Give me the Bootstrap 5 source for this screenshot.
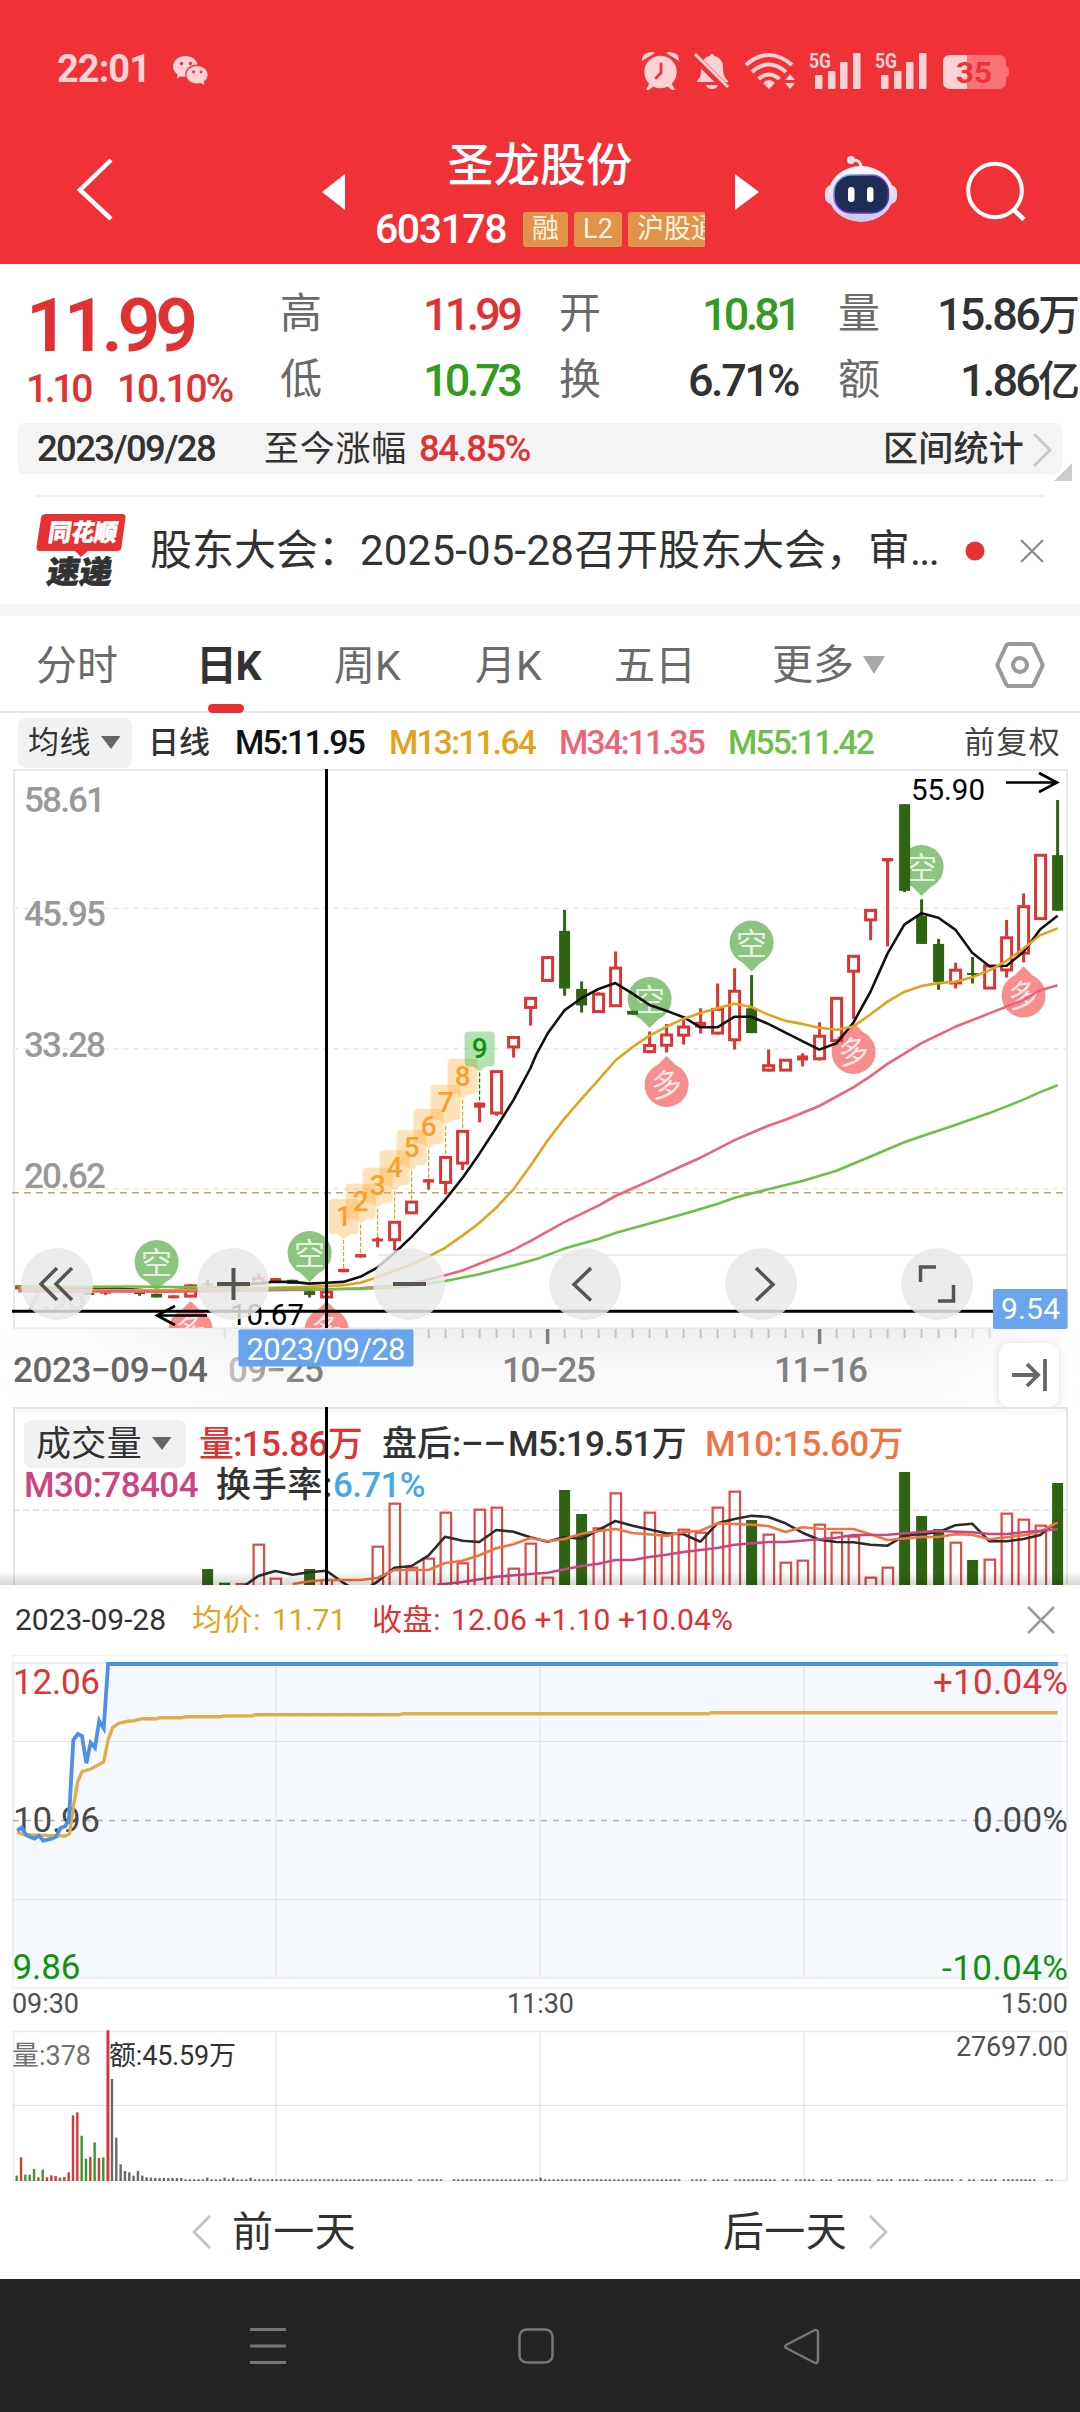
<!DOCTYPE html>
<html lang="zh-CN">
<head>
<meta charset="utf-8">
<meta name="viewport" content="width=device-width, initial-scale=1">
<title>圣龙股份 603178</title>
<link rel="stylesheet" href="https://cdn.jsdelivr.net/npm/bootstrap@5.3.0/dist/css/bootstrap.min.css">
<style>
body{width:1080px;margin:0;background:#fff;color:#323232;font-family:Roboto,"Noto Sans CJK SC",sans-serif;line-height:1;overflow-x:hidden}
svg{display:block}
svg text{font-family:Roboto,"Noto Sans CJK SC",sans-serif}
[data-w]{display:inline-block;white-space:nowrap}
.red{color:#e03232}.green{color:#339a22}.gray{color:#6a6a6a}
.hd{height:264px;background:#f13138;color:#fff}
.status{height:142px;padding:0 0 0 57px;color:#fcd3d5}
.clock{font-size:38px;font-weight:700;margin-top:-4px}
.titlebar{height:122px}
.name{font-size:46px;font-weight:500;height:46px;line-height:46px}
.code{font-size:41px;font-weight:500}
.chip{background:#e2924b;color:#fff4dc;border-radius:3px;height:35px;line-height:34px;font-size:27px;padding:0 9px;white-space:nowrap}
.chips{width:182px;gap:6px;overflow:hidden}
.quote{height:159px;padding-top:17px}
.price{font-size:75px;font-weight:600;padding-top:7px;height:89px}
.chg{font-size:39px;font-weight:500}
.qcell{height:66px}
.qcell .lab{font-size:42px}
.qcell .val{font-size:45px;font-weight:500}
.qcell .val small{font-size:42px}
.range{margin:0 18px;height:51px;background:#f4f4f4;border-radius:6px;padding:2px 9px 0 19px;font-size:35px}
.range .num{font-size:36.5px;font-weight:500}
.corner{right:8px;top:463px}
.news{height:109px;margin-left:36px;margin-right:36px;border-top:2px solid #eee;font-size:42px}
.band{height:12px;background:#f4f4f4}
.tabs{height:97px;border-bottom:2px solid #e6e6e6;font-size:41px;color:#6a6a6a}
.tabs>div{position:relative;height:97px;line-height:100px;white-space:nowrap}
.tabs .on{color:#323232;font-weight:700}
.tabs .on::after{content:"";position:absolute;left:12px;bottom:0;width:36px;height:9px;border-radius:5px;background:#e63232}
.ma{height:56px;font-size:31px;padding-top:3px}
.ma .num{font-weight:500;font-size:33.5px}
.vinfo .num{font-weight:500;font-size:35px}
.pick{background:#f1f1f1;border-radius:8px;white-space:nowrap}
.kpane{height:638px}
.ctl{left:21px;top:479px;gap:104px}
.rnd{width:72px;height:72px;border-radius:50%;background:rgba(232,232,232,.84)}
.jump{left:999px;top:574px;width:60px;height:64px;border-radius:11px;background:#fff;box-shadow:0 1px 9px rgba(0,0,0,.13)}
.vpane{height:178px}
.vinfo{padding:13px 0 0 24px;font-size:35px;font-weight:500}
.sheet{background:#fff}
.shead{height:70px;padding:0 25px 0 15px;font-size:30px}
.pn{height:96px;font-size:41px;padding-top:2px}
.sysnav{height:133px;background:#242424}
</style>
<script src="https://cdn.jsdelivr.net/npm/bootstrap@5.3.0/dist/js/bootstrap.bundle.min.js"></script>
</head>
<body>
<header class="hd">
  <div class="status d-flex align-items-center">
    <span class="clock" data-w="93">22:01</span>
    <svg width="36" height="30" viewBox="0 0 36 30" style="margin-left:23px" fill="#fcd3d5"><path d="M13 0C5.500 0 0 4.800 0 10.600c0 3.300 1.800 6 4.700 8L3.700 22.400l4.300-2.200c1.500.4 3 .6 4.500.5C11 14 16.500 8.500 24.700 8.600 23.500 3.600 18.700 0 13 0z"/><path d="M24 10c-6 0-10.500 3.900-10.500 8.800S18 27.600 24 27.600c1.300 0 2.500-.2 3.600-.5l4 2-1-3.300c2.500-1.700 4-4.200 4-7C34.600 13.900 30 10 24 10z"/><g fill="#f13138"><circle cx="8.500" cy="7.500" r="1.700"/><circle cx="17.500" cy="7.500" r="1.700"/><circle cx="20.500" cy="16" r="1.400"/><circle cx="28" cy="16" r="1.400"/></g></svg>
    <svg width="372" height="44" viewBox="640 48 372 44" style="margin-left:431px" fill="#fcd3d5">
      <g><circle cx="660.500" cy="71" r="16.200"/><path d="M642 60q-1-8 9-9 3 0 4 1zM679 60q1-8-9-9-3 0-4 1zM649 83l-3 6h3l5-4zM672 83l3 6h-3l-5-4z"/><path d="M661 63v9l-5 5" fill="none" stroke="#f13138" stroke-width="2.800" stroke-linecap="round"/></g>
      <g><path d="M712 53c2 0 2 2 2 2 6 1 9 6 9 11 0 8 2 11 5 14v1H697v-1c4-4 4-7 4-14 0-6 4-10 9-11 0 0 0-2 2-2zM706 84h12q-1 4-6 4t-6-4z"/><path d="M693 54l35 35" stroke="#f13138" stroke-width="8"/><path d="M695 53l33 33" stroke="#fcd3d5" stroke-width="3"/></g>
      <g fill="none" stroke="#fcd3d5" stroke-width="4"><path d="M746 64q23-20 46 0"/><path d="M752 71q17-15 34 0"/><path d="M758.500 78q10-9 21 0"/></g><path d="M763 82q6-6 12 0l-6 6zM785 79l5-6 5 6zM785 82h10l-5 6z"/>
      <g id="sig"><text x="809" y="66.500" font-size="20" font-weight="700" textLength="22" lengthAdjust="spacingAndGlyphs">5G</text><rect x="815" y="74" width="7.500" height="14" rx="1"/><rect x="828" y="70" width="7.500" height="18" rx="1"/><rect x="840" y="61" width="7.500" height="27" rx="1"/><rect x="853" y="52" width="7.500" height="36" rx="1"/></g>
      <use href="#sig" x="66"/>
      <path d="M951 54h48q7 0 7 7v4q3 1 3 6t-3 5v5q0 7-7 7h-48q-8 0-8-7V61q0-7 8-7z" fill="#f87378"/><path d="M951 54h16v34h-16q-8 0-8-7V61q0-7 8-7z"/><text x="956" y="82" font-size="30" font-weight="700" fill="#f13138" textLength="36" lengthAdjust="spacingAndGlyphs">35</text>
    </svg>
  </div>
  <div class="titlebar d-flex">
    <svg width="322" height="122" viewBox="0 142 322 122"><path d="M111 160L80 190l31 29" fill="none" stroke="#fff" stroke-width="4.500"/></svg>
    <svg width="23" height="122" viewBox="322 142 23 122"><path d="M322 192l23-18v36z" fill="#fff"/></svg>
    <div class="text-center" style="width:390px">
      <div class="name"><span data-w="185">圣龙股份</span></div>
      <div class="d-flex align-items-center" style="padding-left:30px;margin-top:21px">
        <span class="code" data-w="131">603178</span>
        <div class="chips d-flex" style="margin-left:17px"><span class="chip">融</span><span class="chip"><span data-w="30">L2</span></span><span class="chip">沪股通</span></div>
      </div>
    </div>
    <svg width="345" height="122" viewBox="735 142 345 122">
      <defs><linearGradient id="rb" x1="0" y1="0" x2="0" y2="1"><stop offset="0" stop-color="#fdfcff"/><stop offset="1" stop-color="#cfc6ec"/></linearGradient><linearGradient id="rf" x1="0" y1="0" x2="1" y2="1"><stop offset="0" stop-color="#7cd0f0"/><stop offset=".5" stop-color="#8038e0"/><stop offset="1" stop-color="#3a38d0"/></linearGradient></defs>
      <path d="M735 174v36l24-18z" fill="#fff"/>
      <path d="M852 160q9-1 9 8" fill="none" stroke="#eceaf8" stroke-width="3"/><circle cx="851" cy="160" r="4" fill="#dfe2f6"/>
      <rect x="825" y="185" width="72" height="19" rx="7" fill="#dcdcf5"/><ellipse cx="861" cy="194" rx="32.500" ry="28" fill="url(#rb)"/>
      <rect x="834" y="175" width="54.500" height="38" rx="17" fill="#1f2c54" stroke="url(#rf)" stroke-width="1.500"/>
      <rect x="848" y="187" width="6.500" height="15" rx="3.200" fill="#fff"/><rect x="867" y="187" width="6.500" height="15" rx="3.200" fill="#fff"/>
      <circle cx="995" cy="190.500" r="26.800" fill="none" stroke="#fff" stroke-width="4"/><path d="M1013 209l11 10.500" stroke="#fff" stroke-width="4.500"/>
    </svg>
  </div>
</header>

<section class="quote d-flex">
  <div style="width:280px;padding-left:26px">
    <div class="price red"><span data-w="167">11.99</span></div>
    <div class="chg red d-flex"><span data-w="64">1.10</span><span data-w="115" style="margin-left:27px">10.10%</span></div>
  </div>
  <div style="width:242px;padding-right:3px">
    <div class="qcell d-flex align-items-center justify-content-between"><span class="lab gray">高</span><span class="val red" data-w="96">11.99</span></div>
    <div class="qcell d-flex align-items-center justify-content-between"><span class="lab gray">低</span><span class="val green" data-w="96">10.73</span></div>
  </div>
  <div style="width:279px;padding-left:37px;padding-right:3px">
    <div class="qcell d-flex align-items-center justify-content-between"><span class="lab gray">开</span><span class="val green" data-w="96">10.81</span></div>
    <div class="qcell d-flex align-items-center justify-content-between"><span class="lab gray">换</span><span class="val" data-w="110">6.71%</span></div>
  </div>
  <div style="width:279px;padding-left:37px">
    <div class="qcell d-flex align-items-center justify-content-between"><span class="lab gray">量</span><span class="val text-nowrap"><span data-w="101">15.86</span><small>万</small></span></div>
    <div class="qcell d-flex align-items-center justify-content-between"><span class="lab gray">额</span><span class="val text-nowrap"><span data-w="78">1.86</span><small>亿</small></span></div>
  </div>
</section>
<div class="range d-flex align-items-center">
  <span class="num" data-w="178">2023/09/28</span><span data-w="143" style="margin-left:49px">至今涨幅</span><span class="num red" data-w="111" style="margin-left:12px">84.85%</span>
  <span class="ms-auto" data-w="141" style="margin-right:8px;font-weight:500">区间统计</span>
  <svg width="21" height="36" viewBox="0 0 21 36"><path d="M2 2l16 16L2 34" fill="none" stroke="#c8c8c8" stroke-width="3"/></svg>
</div>
<svg class="corner position-absolute" width="18" height="18"><path d="M18 0v18H0z" fill="#ccc"/></svg>
<div style="height:21px"></div>
<div class="news d-flex align-items-center">
  <svg width="92" height="76" viewBox="36 512 92 76" style="margin-top:-1px"><path d="M46 514h76q4 0 3.500 4l-4 29q-.5 4-4 4H88l-7 6-6-6H40q-4 0-3.500-4l4.500-29q.5-4 5-4z" fill="#e63232"/><g transform="skewX(-9)"><text x="133" y="541" font-size="24" font-weight="900" fill="#fff" textLength="69" lengthAdjust="spacingAndGlyphs" stroke="#fff" stroke-width=".5">同花顺</text><text x="138" y="583" font-size="31" font-weight="900" fill="#323232" stroke="#323232" stroke-width=".8" textLength="65" lengthAdjust="spacingAndGlyphs">速递</text></g></svg>
  <span class="text-nowrap" style="margin-left:22px"><span data-w="210">股东大会：</span><span data-w="214">2025-05-28</span><span>召开股东大会，审</span><span data-w="28">...</span></span>
  <svg width="80" height="30" viewBox="964 535 80 30" class="ms-auto"><circle cx="975" cy="550" r="9.500" fill="#e63232"/><path d="M1021 539l22 22M1043 539l-22 22" stroke="#8a8a8a" stroke-width="2.200"/></svg>
</div>
<div class="band"></div>
<nav class="tabs d-flex">
  <div style="margin-left:36px;width:160px">分时</div><div class="on" style="width:138px"><span data-w="64">日K</span></div><div style="width:141px">周K</div><div style="width:139px">月K</div><div style="width:158px">五日</div>
  <div class="d-flex align-items-center" style="width:223px">更多<svg width="24" height="20" style="margin-left:8px"><path d="M1 1h22L12 19z" fill="#a8a8a8"/></svg></div>
  <div class="d-flex align-items-center"><svg width="50" height="48" viewBox="0 0 50 48" fill="none" stroke="#999"><path d="M14 3h22q2 0 3 2l8 17q1 2 0 4l-8 17q-1 2-3 2H14q-2 0-3-2L3 26q-1-2 0-4l8-17q1-2 3-2z" stroke-width="4"/><circle cx="25" cy="24" r="7" stroke-width="4"/></svg></div>
</nav>
<div class="ma d-flex align-items-center">
  <div class="pick d-flex align-items-center" style="margin-left:18px;width:114px;height:50px;padding-left:10px"><span data-w="63">均线</span><svg width="20" height="14" style="margin-left:10px"><path d="M0 0h19.500L10 13z" fill="#666"/></svg></div>
  <span data-w="62" style="margin-left:16px;font-weight:500">日线</span>
  <span class="num" data-w="129" style="margin-left:25px;color:#111">M5:11.95</span><span class="num" data-w="146" style="margin-left:25px;color:#e2a21c">M13:11.64</span><span class="num" data-w="145" style="margin-left:24px;color:#ec6478">M34:11.35</span><span class="num" data-w="145" style="margin-left:24px;color:#6cbf48">M55:11.42</span>
  <span class="ms-auto" data-w="97" style="margin-right:19px;color:#444">前复权</span>
</div>
<section class="kpane position-relative">
  <svg id="k" width="1080" height="638" viewBox="0 769 1080 638"></svg>
  <div class="ctl position-absolute d-flex">
    <div class="rnd"><svg width="72" height="72" fill="none" stroke="#555" stroke-width="3.500"><path d="M36 20L20 36l16 16M51 20L35 36l16 16"/></svg></div>
    <div class="rnd"><svg width="72" height="72" stroke="#555" stroke-width="4"><path d="M20 36h33M36.500 20v32"/></svg></div>
    <div class="rnd"><svg width="72" height="72" stroke="#555" stroke-width="4"><path d="M20 36h33"/></svg></div>
    <div class="rnd"><svg width="72" height="72" fill="none" stroke="#555" stroke-width="3.500"><path d="M42 20L25 36.500l17 16"/></svg></div>
    <div class="rnd"><svg width="72" height="72" fill="none" stroke="#555" stroke-width="3.500"><path d="M31 20l17 16.500-17 16"/></svg></div>
    <div class="rnd"><svg width="72" height="72" fill="none" stroke="#555" stroke-width="3.500"><path d="M35 19H19.500v15M37 53h15.500V37"/></svg></div>
  </div>
  <div class="jump position-absolute"><svg width="60" height="64" fill="none" stroke="#666" stroke-width="3.800"><path d="M13 32h25M28 21l11 11-11 11M46 16v32"/></svg></div>
</section>
<section class="vpane position-relative overflow-hidden">
  <svg id="v" class="position-absolute top-0 start-0" width="1080" height="178" viewBox="0 1407 1080 178"></svg>
  <div class="vinfo position-relative">
    <div class="d-flex align-items-center" style="height:48px">
      <div class="pick d-flex align-items-center" style="width:162px;height:48px;padding-left:12px;font-weight:400"><span data-w="106">成交量</span><svg width="20" height="14" style="margin-left:10px"><path d="M0 0h19.500L10 13z" fill="#666"/></svg></div>
      <span class="num red" style="margin-left:13px" data-w="163">量:15.86万</span><span data-w="124" style="margin-left:20px">盘后:––</span><span data-w="178" style="margin-left:2px">M5:19.51万</span><span data-w="198" style="margin-left:19px;color:#ef7440">M10:15.60万</span>
    </div>
    <div class="d-flex align-items-center" style="height:34px"><span data-w="174" style="color:#cc4480">M30:78404</span><span data-w="117" style="margin-left:18px">换手率:</span><span data-w="92" style="color:#44a8e6">6.71%</span></div>
  </div>
  <svg class="position-absolute top-0 start-0" width="1080" height="178" viewBox="0 1407 1080 178"><defs><linearGradient id="sh" x1="0" y1="0" x2="0" y2="1"><stop offset="0" stop-opacity="0"/><stop offset="1" stop-opacity=".16"/></linearGradient></defs><path d="M326.500 1407v178" stroke="#000" stroke-width="3"/><rect y="1571" width="1080" height="14" fill="url(#sh)"/></svg>
</section>
<section class="sheet">
  <div class="shead d-flex align-items-center"><span data-w="151">2023-09-28</span><span style="margin-left:26px;color:#e2a21c"><span data-w="69">均价:</span><span data-w="74" style="margin-left:11px">11.71</span></span><span class="red" style="margin-left:26px"><span data-w="69">收盘:</span><span data-w="282" style="margin-left:10px">12.06 +1.10 +10.04%</span></span>
  <svg class="ms-auto" width="28" height="28" stroke="#999" stroke-width="2.500"><path d="M1 1l26 26M27 1L1 27"/></svg></div>
  <svg id="m" width="1080" height="528" viewBox="0 1655 1080 528"></svg>
  <div class="pn d-flex align-items-center">
    <svg width="20" height="36" style="margin-left:192px" fill="none" stroke="#c4c4c4" stroke-width="3"><path d="M18 2L2 18l16 16"/></svg><span data-w="124" style="margin-left:20px">前一天</span>
    <span data-w="124" style="margin-left:367px">后一天</span><svg width="20" height="36" style="margin-left:21px" fill="none" stroke="#c4c4c4" stroke-width="3"><path d="M2 2l16 16L2 34"/></svg>
  </div>
</section>
<footer class="sysnav"><svg width="1080" height="133" viewBox="0 2279 1080 133" fill="none" stroke="#777" stroke-width="2.500"><path d="M250 2329.500h36M250 2346h36M250 2362.500h36" stroke-width="3"/><rect x="519.500" y="2329.500" width="33" height="33" rx="7"/><path d="M787 2344.500l27-14q4-2 4 3v26q0 5-4 3l-27-14q-4-2 0-4z"/></svg></footer>

<script>
// Spread or tighten letters so each label takes the width given in data-w.
document.querySelectorAll('[data-w]').forEach(e=>{
  const n=[...e.textContent].length,w=e.getBoundingClientRect().width,t=+e.dataset.w;
  e.style.letterSpacing=((t-w)/n)+'px';
});
const cx=i=>20.6+17*i, RED='#dc3535', GRN='#2f6512';
const T=(x,y,s,w,t,fill,extra='')=>`<text x="${x}" y="${y}" font-size="${s}" textLength="${w}" fill="${fill}" ${extra}>${t}</text>`;
// Curves: first list covers the left half, second the right half.
const line=(a,b,Y,col,w)=>{
  const p=[...a.map(([x,y])=>[x/2.904,Y(y)]),...b.map(([x,y])=>[540+x/2.904,Y(y)])];
  return `<polyline fill="none" stroke="${col}" stroke-width="${w}" stroke-linejoin="round" points="${p.map(q=>q[0].toFixed(1)+','+q[1].toFixed(1)).join(' ')}"/>`;
};
const Y=v=>760+v/2.376;
let s='<defs><linearGradient id="ax" x1="0" x2="1"><stop offset="0" stop-color="#fff"/><stop offset=".25" stop-color="#fff" stop-opacity="0"/><stop offset=".85" stop-color="#fff" stop-opacity="0"/><stop offset="1" stop-color="#fff"/></linearGradient><linearGradient id="ay" x1="0" y1="0" x2="0" y2="1"><stop offset="0" stop-color="#efefef"/><stop offset=".5" stop-color="#f8f8f8"/><stop offset="1" stop-color="#fafafa"/></linearGradient><linearGradient id="dt" gradientUnits="userSpaceOnUse" x1="228" x2="300"><stop offset="0" stop-color="#c4c4c4"/><stop offset="1" stop-color="#808080"/></linearGradient><clipPath id="kc"><rect x="13" y="769" width="1055" height="559"/></clipPath></defs>';
s+='<rect x="0" y="1328" width="1080" height="79" fill="url(#ay)"/><rect x="0" y="1328" width="1080" height="79" fill="url(#ax)"/>';
s+='<path d="M13 770h1055M14 769v559M1067 769v559" stroke="#e9e9e9" stroke-width="2" fill="none"/><path d="M13 1328h1055" stroke="#ddd"/>';
s+='<path d="M13 908.600H1067M13 1048.700H1067M13 1188.900H1067" stroke="#ebebeb" stroke-width="1.500" stroke-dasharray="6 4"/><path d="M378 1255H1067" stroke="#e4e4e4" stroke-width="1.500"/><path d="M12 1192.700H1064" stroke="#c9a468" stroke-width="1.600" stroke-dasharray="7 5"/>';
[['58.61',812],['45.95',926],['33.28',1057],['20.62',1188],['7.96',1310]].forEach(([t,y])=>s+=T(24,y,35,t.length>4?82:62,t,y==1310?'#c8c8c8':'#999','font-weight="500"'));
const up=(i,top)=>{const x=cx(i);return `<circle cx="${x}" cy="${top+22}" r="22" fill="#8bc57f"/><path d="M${x-11} ${top+40}l11 11 11-11z" fill="#8bc57f"/><text x="${x}" y="${top+34}" font-size="31" text-anchor="middle" fill="#fff" fill-opacity=".8">空</text>`};
const dn=(i,tip)=>{const x=cx(i);return `<circle cx="${x}" cy="${tip+29}" r="22" fill="#f68e8d"/><path d="M${x-11} ${tip+11}l11-11 11 11z" fill="#f68e8d"/><text x="${x}" y="${tip+40}" font-size="31" text-anchor="middle" fill="#fff" fill-opacity=".8" transform="rotate(-8 ${x} ${tip+29})">多</text>`};
s+='<g clip-path="url(#kc)">'+up(8,1240)+up(17,1231)+up(37,977)+up(43,920.5)+up(53,845)+dn(10,1301)+dn(18,1301)+dn(38,1056)+dn(49,1023)+dn(59,966.5)+'</g>';
// Nine-turn count markers above candles 19 to 27.
[1043,1007,969,927,880,829,772,710,645].forEach((v,j)=>{const x=cx(19+j),y=Y(v),g=j==8;
  s+=`<path d="M${x-11} ${y}h22q4 0 4 4v27q0 4-4 4h-5l-6 5-6-5h-5q-4 0-4-4v-27q0-4 4-4z" fill="${g?'#009b00':'#ff9e1b'}" fill-opacity=".3"/><path d="M${x} ${y+41}v31" stroke="${g?'#007a00':'#dba520'}" stroke-width="1.200" stroke-dasharray="4 2"/><text x="${x}" y="${y+27}" font-size="28" font-weight="500" text-anchor="middle" fill="${g?'#0a930a':'#f7a128'}">${j+1}</text>`});
// Candles: index, kind (r hollow, R solid red, g green), high, body top, body bottom, low.
const C=[[0,'R',1248,1248,1258,1258],[1,'R',1258,1258,1262,1262],[2,'g',1262,1262,1265,1265],[3,'R',1262,1262,1266,1266],[4,'g',1266,1266,1271,1271],[5,'R',1262,1262,1268,1271],[6,'R',1256,1256,1260,1260],[7,'g',1264,1264,1269,1273],[8,'g',1268,1268,1277,1277],[9,'R',1272,1272,1279,1279],[10,'r',1245,1247,1275,1275],[11,'g',1235,1244,1248,1256],[12,'g',1244,1246,1251,1253],[13,'R',1248,1248,1253,1253],[14,'r',1220,1230,1245,1246],[15,'R',1231,1231,1240,1240],[16,'g',1235,1235,1245,1245],[17,'g',1262,1262,1271,1277],[18,'r',1260,1262,1277,1277],[19,'R',1209,1209,1217,1217],[20,'R',1174,1174,1182,1182],[21,'R',1134,1137,1144,1158],[22,'r',1096,1096,1141,1165],[23,'r',1048,1048,1077,1077],[24,'R',996,996,1004,1021],[25,'r',942,942,1005,1032],[26,'r',880,880,959,974],[27,'R',814,814,826,861],[28,'r',738,738,840,845],[29,'r',657,657,683,707],[30,'r',564,564,589,631],[31,'r',467,467,525,525],[32,'g',356,406,543,560],[33,'g',526,544,583,600],[34,'r',552,554,599,599],[35,'r',455,492,585,587],[36,'g',596,596,605,605],[37,'r',645,676,694,697],[38,'r',627,651,679,695],[39,'r',608,632,655,676],[40,'R',590,622,636,650],[41,'r',531,590,650,652],[42,'r',495,547,666,688],[43,'g',511,590,649,649],[44,'r',688,724,738,740],[45,'r',711,711,738,738],[46,'R',697,702,714,728],[47,'r',623,654,711,714],[48,'r',564,564,668,668],[49,'r',464,464,503,615],[50,'r',355,355,381,428],[51,'R',233,233,241,443],[52,'g',105,105,311,314],[53,'g',331,370,437,437],[54,'g',425,437,528,546],[55,'r',482,497,531,543],[56,'g',468,506,511,531],[57,'r',487,487,543,543],[58,'r',380,420,500,517],[59,'r',317,346,460,481],[60,'r',224,224,378,380],[61,'g',95,226,358,358]];
C.forEach(([i,k,h,a,b,l])=>{const x=cx(i),c=k=='g'?GRN:RED;
  if(k!='r') s+=`<path d="M${x} ${Y(h)}V${Y(l)}" stroke="${c}" stroke-width="3"/><rect x="${x-5.500}" y="${Y(a)}" width="11" height="${Y(b)-Y(a)}" fill="${c}"/>`;
  else s+=`<path d="M${x} ${Y(h)}V${Y(a)}M${x} ${Y(b)}V${Y(l)}" stroke="${c}" stroke-width="3"/><rect x="${x-5}" y="${Y(a)+1}" width="10" height="${Math.max(3,Y(b)-Y(a)-1.500)}" fill="none" stroke="${c}" stroke-width="3"/>`});
s+=line([[53,1256],[200,1254],[350,1256],[450,1262],[550,1258],[700,1248],[790,1240],[850,1240],[898,1244],[948,1242],[997,1240],[1046,1228],[1096,1206],[1145,1172],[1195,1133],[1244,1090],[1293,1045],[1343,993],[1392,936],[1441,874],[1491,808],[1540,733]],[[-10,698],[22,650],[71,595],[120,566],[170,544],[219,530],[269,555],[318,582],[367,596],[417,611],[466,635],[515,635],[565,610],[614,610],[663,627],[713,648],[762,668],[811,688],[861,673],[910,624],[960,550],[1009,460],[1058,391],[1108,364],[1157,375],[1206,403],[1255,458],[1305,490],[1355,489],[1404,456],[1453,402],[1503,370]],Y,'#111',2.6);
s+=line([[53,1258],[500,1260],[898,1252],[997,1248],[1046,1242],[1096,1229],[1145,1214],[1195,1198],[1244,1180],[1293,1159],[1343,1130],[1392,1100],[1441,1064],[1491,1020],[1540,965]],[[22,904],[71,852],[120,806],[170,760],[219,714],[269,682],[318,655],[367,634],[417,615],[466,601],[515,590],[565,579],[614,587],[663,605],[713,620],[762,627],[811,636],[861,641],[910,633],[960,604],[1009,574],[1058,551],[1108,537],[1157,530],[1206,527],[1255,516],[1305,500],[1355,477],[1404,448],[1453,416],[1503,400]],Y,'#e2a21c',2.6);
s+=line([[53,1262],[500,1263],[948,1258],[1046,1255],[1145,1248],[1195,1244],[1293,1224],[1343,1213],[1392,1197],[1441,1181],[1491,1164],[1540,1143]],[[0,1130],[71,1098],[170,1059],[219,1036],[318,1000],[417,963],[466,945],[565,903],[663,869],[713,855],[811,822],[910,778],[960,751],[1009,722],[1108,673],[1206,634],[1305,602],[1404,570],[1453,547],[1503,535]],Y,'#ec6478',2.6);
s+=line([[53,1253],[380,1251],[948,1257],[1046,1257],[1145,1253],[1244,1244],[1293,1238],[1392,1222],[1491,1201]],[[0,1183],[71,1161],[170,1138],[219,1124],[318,1101],[417,1079],[515,1055],[565,1040],[614,1030],[663,1020],[762,1000],[861,976],[960,942],[1058,908],[1108,894],[1206,867],[1305,839],[1404,807],[1453,789],[1503,773]],Y,'#6cbf48',2.6);
s+='<path d="M12 1311.300H994" stroke="#000" stroke-width="3"/><path d="M326.500 769V1328" stroke="#000" stroke-width="3"/>';
s+='<path d="M207 1315.500H158M175 1306l-18 9.500 18 9.500M1006 782.500h49M1039 773l18 9.500-18 9.500" fill="none" stroke="#000" stroke-width="2.600"/>';
s+=T(230,1325,29.5,74,'10.67','#000')+T(911,800,29.5,74,'55.90','#000');
for(let i=12;i<=57;i++){const big=i==31||i==47;s+=`<path d="M${cx(i)} 1329v${big?15:9}" stroke="${big?'#808080':'#c4c4c4'}" stroke-opacity="${i<15?.4:i>55?.5:1}" stroke-width="${big?3.5:2}"/>`}
s+=T(13,1382,35,195,'2023−09−04','#666','font-weight="500"')+T(228,1382,35,96,'09−25','url(#dt)','font-weight="500"')+T(502,1382,35,94,'10−25','#808080','font-weight="500"')+T(774,1382,35,94,'11−16','#808080','font-weight="500"');
s+='<rect x="238.500" y="1329.500" width="175" height="37" rx="2" fill="#68a4ee"/>'+T(246.5,1360,31,159,'2023/09/28','#fff')+'<rect x="993" y="1289" width="74.500" height="40" rx="2" fill="#6ba5ee"/>'+T(1001,1319,30,59,'9.54','#fff');
document.getElementById('k').innerHTML=s;

// Volume bars and averages.
const V=v=>1380+v/3;
s='<rect x="14" y="1407" width="1053" height="6" fill="#fafafa"/><path d="M13 1408h1055M14 1408v180M1067 1408v180" stroke="#e4e4e4" stroke-width="2"/><path d="M13 1510.300H1067" stroke="#dcdcdc" stroke-width="1.500" stroke-dasharray="6 4"/>';
[[11,'g',567],[12,'g',608],[13,'r',609],[14,'r',491],[15,'r',593],[17,'g',567],[18,'r',597],[21,'r',497],[22,'r',368],[23,'r',560],[24,'r',533],[25,'r',395],[26,'r',547],[27,'r',386],[28,'r',380],[29,'r',563],[30,'r',488],[31,'r',590],[32,'g',330],[33,'g',402],[34,'r',442],[35,'r',337],[37,'r',395],[38,'r',463],[39,'r',446],[40,'r',455],[41,'r',380],[42,'r',332],[43,'g',420],[44,'r',461],[45,'r',545],[46,'r',539],[47,'r',431],[48,'r',455],[49,'r',467],[50,'r',590],[51,'r',560],[52,'g',276],[53,'g',408],[54,'g',447],[55,'r',485],[56,'g',540],[57,'r',536],[58,'r',398],[59,'r',416],[60,'r',434],[61,'g',309]].forEach(([i,k,t])=>{s+=k=='g'?`<rect x="${cx(i)-5.500}" y="${V(t)}" width="11" height="200" fill="${GRN}"/>`:`<rect x="${cx(i)-5}" y="${V(t)+1}" width="10.500" height="200" fill="none" stroke="#d84c4a" stroke-width="2.200"/>`});
s+=line([[700,625],[750,588],[800,573],[850,584],[898,577],[948,572],[997,608],[1046,640],[1096,605],[1145,563],[1195,558],[1244,527],[1293,470],[1343,482],[1392,486],[1441,450],[1491,455],[1540,472]],[[22,485],[71,471],[120,477],[170,450],[219,423],[269,437],[367,460],[417,463],[466,485],[515,430],[565,417],[614,407],[663,411],[713,430],[762,458],[811,479],[861,486],[910,487],[960,494],[1009,497],[1058,467],[1157,457],[1206,436],[1255,431],[1305,484],[1355,484],[1404,477],[1453,465],[1503,423]],V,'#2c2c2c',2.6);
s+=line([[850,612],[898,604],[948,600],[1046,600],[1096,594],[1145,570],[1244,570],[1293,549],[1343,542],[1392,526],[1441,505],[1491,493],[1540,474]],[[22,484],[71,477],[120,461],[170,453],[219,447],[269,459],[367,467],[417,457],[466,452],[515,430],[614,434],[663,438],[713,456],[762,442],[811,446],[910,447],[960,463],[1009,480],[1108,471],[1157,471],[1206,463],[1255,464],[1305,478],[1404,466],[1453,455],[1503,427]],V,'#ef7440',2.6);
s+=line([[1270,614],[1343,606],[1441,590],[1540,582]],[[22,578],[120,558],[170,551],[219,540],[269,540],[318,531],[367,524],[417,516],[515,504],[565,494],[663,486],[713,486],[811,478],[861,473],[910,465],[1009,464],[1108,456],[1157,453],[1255,457],[1305,462],[1355,462],[1404,457],[1503,448]],V,'#cc4480',2.6);
document.getElementById('v').innerHTML=s;

// Intraday price and volume of the selected day.
const P=[[50,1352],[63,1342],[76,1366],[100,1376],[113,1367],[126,1382],[150,1376],[163,1370],[175,1345],[190,1338],[200,1320],[213,1080],[226,1062],[238,1068],[251,1150],[263,1088],[276,1103],[288,1022],[301,1045],[314,852]];
const pts=P.map(([x,y])=>(x/2.904).toFixed(1)+','+V(y).toFixed(1)).join(' ');
s=`<polygon points="${pts} 1063,1664 1063,1978 15,1978 15,1830" fill="#f5f9fe"/>`;
s+='<path d="M12.500 1655.500H1067.500M12.500 1655V1988H1067.500V1655" fill="none" stroke="#f2f2f2" stroke-width="1.500"/><path d="M13 1663H1067M13 1978H1067M13 2031.500H1067M13.500 1663V1978M1067 1663V1978M276 1663V1978M540 1663V1978M804 1663V1978M13.500 2031V2181M1067 2031V2181M276 2031V2181M540 2031V2181M804 2031V2181M13 2180.500H1067" stroke="#eaecef" stroke-width="1.700"/><path d="M13 1741.500H1067M13 1899.500H1067M13 2105.500H1067" stroke="#dfe2e6" stroke-width="1.200"/><path d="M13 1820.500H1067" stroke="#acb0b4" stroke-width="1.500" stroke-dasharray="6 6"/>';
s+=T(13,1694,35,87,'12.06','#dc3535')+T(13,1832,35,87,'10.96','#484848')+T(12.5,1979,35,68,'9.86','#109210');
s+=line([[50,1355],[63,1362],[90,1365],[190,1368],[202,1362],[213,1280],[226,1205],[238,1175],[263,1167],[301,1146],[314,1080],[327,1043],[345,1030],[375,1023],[390,1022],[415,1016],[455,1016],[465,1013],[530,1013],[540,1010],[640,1010],[650,1008],[735,1007],[740,1004],[1160,1004],[1170,1001]],[[490,1001],[497,998],[1503,998]],V,'#e0ad48',3.4);
s+=`<polyline points="${pts} 1058,1664" fill="none" stroke="#4c91e6" stroke-width="3.800"/>`;
s+=T(933,1694,35,135,'+10.04%','#dc3535')+T(973,1832,35,95,'0.00%','#484848')+T(942,1979.5,35,126,'-10.04%','#109210');
s+=T(12,2013,27,67,'09:30','#505050')+T(507,2013,27,67,'11:30','#505050')+T(1001,2013,27,67,'15:00','#505050');
const B=['g977','r922','g974','g974','g957','r982','g959','r982','r976','r978','r983','r981','r967','r796','r787','g857','g926','r921','g877','r924','g922','r541','k687','k863','k943','k963','k967','k977','k963','k977','k982','k983'];
for(let j=0;j<240;j++){let b=B[j]||(j<39?'k984':(j==44||j==48||j==50||j==54||j==121?'k983':'k988'));if(j>90&&[92,99,100,154,155,160,165,176,179,185,189,198,203,209,217,219,222,227,236,237].includes(j))continue;
  const y=1850+b.slice(1)/3;s+=`<rect x="${15.5+4.33*j}" y="${y}" width="${j==21?3:2.4}" height="${2181-y}" fill="${{g:'#3c962c',r:'#d03a38',k:'#6a6a6a'}[b[0]]}"/>`}
s+=T(12,2065,27,79,'量:378','#707070')+T(109,2065,27,127,'额:45.59万','#323232')+T(956,2056,27,112,'27697.00','#505050');
document.getElementById('m').innerHTML=s;
</script>
</body>
</html>
